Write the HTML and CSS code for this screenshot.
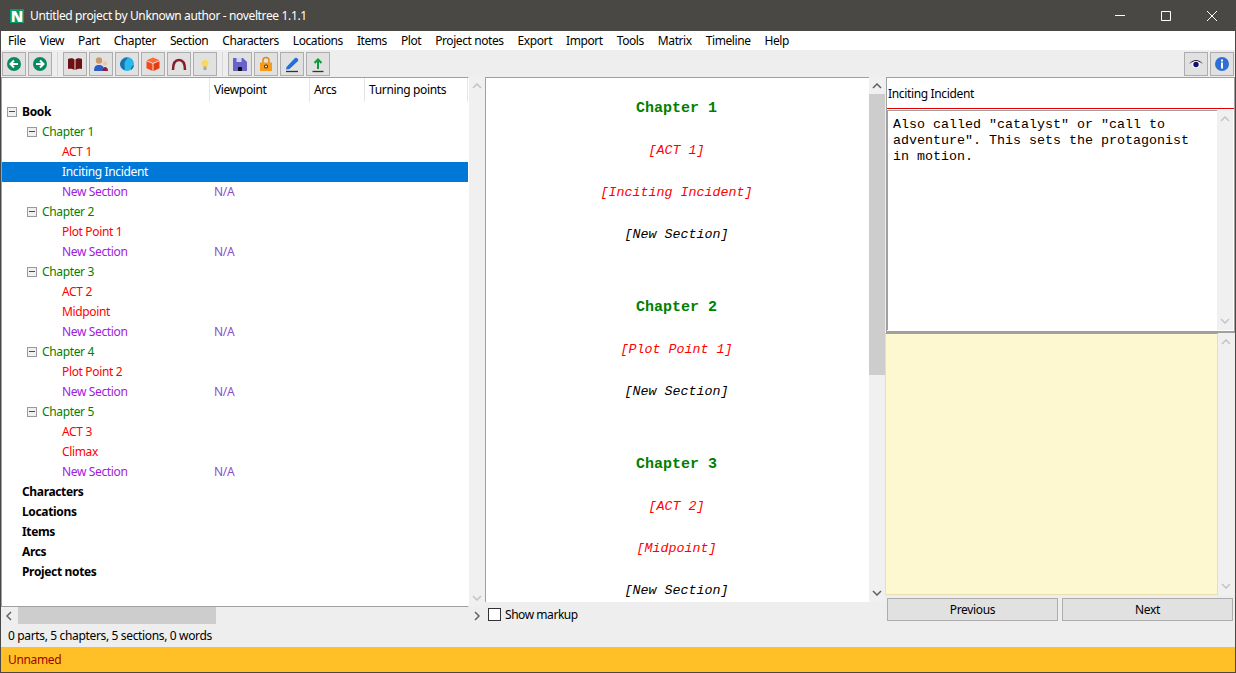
FILE: index.html
```html
<!DOCTYPE html>
<html lang="en">

<head>
    <meta charset="UTF-8">
    <title>Untitled project by Unknown author - noveltree 1.1.1</title>
    <link rel="stylesheet" href="styles.css">
</head>

<body>
    <div class="window">

        <div class="titlebar">
            <span class="logo">N</span>
            <span class="title">Untitled project by Unknown author - noveltree 1.1.1</span>
            <div class="winbtns">
                <span class="winbtn"><svg width="12" height="12" viewBox="0 0 12 12"><path d="M1 5.500h10" stroke="#fff" fill="none"/></svg></span>
                <span class="winbtn"><svg width="12" height="12" viewBox="0 0 12 12"><path d="M1.500 1.500h9v9h-9z" stroke="#fff" fill="none"/></svg></span>
                <span class="winbtn"><svg width="12" height="12" viewBox="0 0 12 12"><path d="M1 1l10 10M11 1L1 11" stroke="#fff" fill="none"/></svg></span>
            </div>
        </div>

        <div class="menubar">
            <span>File</span><span>View</span><span>Part</span><span>Chapter</span><span>Section</span><span>Characters</span><span>Locations</span><span>Items</span><span>Plot</span><span>Project notes</span><span>Export</span><span>Import</span><span>Tools</span><span>Matrix</span><span>Timeline</span><span>Help</span>
        </div>

        <div class="toolbar">
            <button class="tool"><svg width="18" height="18" viewBox="0 0 18 18"><circle cx="9" cy="9" r="7" fill="#0a8a5c"/><path d="M13 9H6M9 5.500L5.500 9 9 12.500" stroke="#fff" stroke-width="2" fill="none"/></svg></button>
            <button class="tool"><svg width="18" height="18" viewBox="0 0 18 18"><circle cx="9" cy="9" r="7" fill="#0a8a5c"/><path d="M5 9h7M9 5.500L12.500 9 9 12.500" stroke="#fff" stroke-width="2" fill="none"/></svg></button>
            <i class="sep"></i>
            <button class="tool"><svg width="18" height="18" viewBox="0 0 18 18"><path d="M2 4c2-1 5-1 6.500.5V15C7 14 4 13.500 2 14zM16 4c-2-1-5-1-6.500.5V15c1.500-1 4.500-1.500 6.500-1z" fill="#6e0f14"/></svg></button>
            <button class="tool"><svg width="18" height="18" viewBox="0 0 18 18"><circle cx="7" cy="5.500" r="3.200" fill="#c99a6b"/><path d="M2 16c0-4.500 1.500-6 5-6s5 1.500 5 6z" fill="#2f5fc4"/><circle cx="13" cy="8.500" r="2.300" fill="#eec9a0"/><path d="M10.500 16c0-2.500 1-4 2.500-4s3 1 3 4z" fill="#8c1f3c"/></svg></button>
            <button class="tool"><svg width="18" height="18" viewBox="0 0 18 18"><circle cx="9" cy="9" r="7" fill="#2ab7ea"/><path d="M3 6.500C5 3.500 7.500 2.500 9.500 2.500 9 5 7 5.500 6.500 8 6 10.500 7.500 12 6.500 15 4 14 2 11 2 9c0-1 .5-1.800 1-2.500zM13 15c-.5-2 .5-4 3-5-.2 2-1.200 3.800-3 5z" fill="#1c6fa8"/></svg></button>
            <button class="tool"><svg width="18" height="18" viewBox="0 0 18 18"><path d="M9 2.500l6.500 2.700L9 8 2.500 5.200z" fill="#ff6a3c"/><path d="M2.500 6.200l6 2.600V16l-6-2.800z" fill="#f04a1c"/><path d="M15.500 6.200l-6 2.600V16l6-2.800z" fill="#e23c12"/></svg></button>
            <button class="tool"><svg width="18" height="18" viewBox="0 0 18 18"><path d="M3 15C3 8 5.500 5 9 5s6 3 6 10" stroke="#842029" stroke-width="2.500" fill="none"/></svg></button>
            <button class="tool"><svg width="18" height="18" viewBox="0 0 18 18"><circle cx="9" cy="8.500" r="3.500" fill="#fbd75b"/><path d="M7.500 11.500h3V15h-3z" fill="#a8a8a0"/></svg></button>
            <i class="sep"></i>
            <button class="tool"><svg width="18" height="18" viewBox="0 0 18 18"><path d="M2 3h10l4 4v9H2z" fill="#6a62c8"/><path d="M5.500 3h5v4h-5z" fill="#d5d2f2"/><path d="M7 12h4v4H7z" fill="#111"/></svg></button>
            <button class="tool"><svg width="18" height="18" viewBox="0 0 18 18"><path d="M6 8V5.500a3 3 0 016 0V8" stroke="#e08a10" stroke-width="1.500" fill="none"/><path d="M3 7.500h12V16H3z" fill="#fb9a17"/><circle cx="9" cy="11.500" r="2" fill="#3a2a10"/><circle cx="9" cy="11.500" r="1" fill="#fff"/></svg></button>
            <button class="tool"><svg width="18" height="18" viewBox="0 0 18 18"><path d="M3.500 12L11.500 3.500c1-1 2-1 3 0s1 2 0 3L6.500 14l-3.500.5z" fill="#1f6fe0"/><path d="M3 16.500h12" stroke="#333" stroke-width="1.300"/></svg></button>
            <button class="tool"><svg width="18" height="18" viewBox="0 0 18 18"><path d="M9 14V5M5.500 8L9 4.500 12.500 8" stroke="#0f9a3c" stroke-width="2" fill="none"/><path d="M3.500 16.500h11" stroke="#4a2a2a" stroke-width="1.300"/></svg></button>
            <div class="spacer"></div>
            <button class="tool"><svg width="18" height="18" viewBox="0 0 18 18"><path d="M2 9c2.500-3 4.500-4 7-4s4.500 1 7 4c-2.500-2-4.500-2.500-7-2.500S4.500 7 2 9z" fill="#222"/><ellipse cx="9" cy="9.500" rx="3.800" ry="3.600" fill="#fff"/><circle cx="9" cy="9.500" r="2.700" fill="#14146e"/></svg></button>
            <button class="tool"><svg width="18" height="18" viewBox="0 0 18 18"><circle cx="9" cy="9" r="7" fill="#2f6fd4"/><path d="M8 4.500h2v2H8zM8 7.500h2V13.500H8z" fill="#fff"/></svg></button>
        </div>

        <div class="main">

            <div class="left">
                <div class="tree-wrap">
                    <div class="tree">
                        <div class="tree-head">
                            <span class="col-name"></span>
                            <span class="col-vp">Viewpoint</span>
                            <span class="col-arcs">Arcs</span>
                            <span class="col-tp">Turning points</span>
                        </div>
                        <div class="row book"><i class="minus"></i>Book</div>
                        <div class="row chapter"><i class="minus"></i>Chapter 1</div>
                        <div class="row stage">ACT 1</div>
                        <div class="row stage selected">Inciting Incident</div>
                        <div class="row sect"><span class="col-name">New Section</span><span class="na">N/A</span></div>
                        <div class="row chapter"><i class="minus"></i>Chapter 2</div>
                        <div class="row stage">Plot Point 1</div>
                        <div class="row sect"><span class="col-name">New Section</span><span class="na">N/A</span></div>
                        <div class="row chapter"><i class="minus"></i>Chapter 3</div>
                        <div class="row stage">ACT 2</div>
                        <div class="row stage">Midpoint</div>
                        <div class="row sect"><span class="col-name">New Section</span><span class="na">N/A</span></div>
                        <div class="row chapter"><i class="minus"></i>Chapter 4</div>
                        <div class="row stage">Plot Point 2</div>
                        <div class="row sect"><span class="col-name">New Section</span><span class="na">N/A</span></div>
                        <div class="row chapter"><i class="minus"></i>Chapter 5</div>
                        <div class="row stage">ACT 3</div>
                        <div class="row stage">Climax</div>
                        <div class="row sect"><span class="col-name">New Section</span><span class="na">N/A</span></div>
                        <div class="row top">Characters</div>
                        <div class="row top">Locations</div>
                        <div class="row top">Items</div>
                        <div class="row top">Arcs</div>
                        <div class="row top">Project notes</div>
                    </div>
                    <div class="vscroll">
                        <svg class="arrow" width="10" height="6" viewBox="0 0 10 6"><path d="M1 5l4-4 4 4" stroke="#c4c4c4" stroke-width="1.500" fill="none"/></svg>
                        <svg class="arrow" width="10" height="6" viewBox="0 0 10 6"><path d="M1 1l4 4 4-4" stroke="#c4c4c4" stroke-width="1.500" fill="none"/></svg>
                    </div>
                </div>
                <div class="hscroll">
                    <svg width="6" height="10" viewBox="0 0 6 10"><path d="M5 1L1 5l4 4" stroke="#606060" stroke-width="1.500" fill="none"/></svg>
                    <div class="hthumb"></div>
                    <svg width="6" height="10" viewBox="0 0 6 10"><path d="M1 1l4 4-4 4" stroke="#606060" stroke-width="1.500" fill="none"/></svg>
                </div>
                <div class="counts">0 parts, 5 chapters, 5 sections, 0 words</div>
            </div>

            <div class="middle">
                <div class="mid-wrap">
                    <div class="viewer">
                        <p class="v-chapter">Chapter 1</p>
                        <p class="v-stage">[ACT 1]</p>
                        <p class="v-stage">[Inciting Incident]</p>
                        <p class="v-sect">[New Section]</p>
                        <p class="v-chapter">Chapter 2</p>
                        <p class="v-stage">[Plot Point 1]</p>
                        <p class="v-sect">[New Section]</p>
                        <p class="v-chapter">Chapter 3</p>
                        <p class="v-stage">[ACT 2]</p>
                        <p class="v-stage">[Midpoint]</p>
                        <p class="v-sect">[New Section]</p>
                    </div>
                    <div class="vscroll mid-scroll">
                        <svg class="arrow" width="10" height="6" viewBox="0 0 10 6"><path d="M1 5l4-4 4 4" stroke="#606060" stroke-width="1.500" fill="none"/></svg>
                        <div class="vthumb"></div>
                        <svg class="arrow" width="10" height="6" viewBox="0 0 10 6"><path d="M1 1l4 4 4-4" stroke="#606060" stroke-width="1.500" fill="none"/></svg>
                    </div>
                </div>
                <label class="markup"><i class="check"></i>Show markup</label>
            </div>

            <div class="right">
                <div class="element">
                    <div class="el-title">Inciting Incident</div>
                    <div class="el-body">
                        <div class="el-text">Also called "catalyst" or "call to adventure". This sets the protagonist in motion.</div>
                        <div class="vscroll">
                            <svg class="arrow" width="10" height="6" viewBox="0 0 10 6"><path d="M1 5l4-4 4 4" stroke="#c4c4c4" stroke-width="1.500" fill="none"/></svg>
                            <svg class="arrow" width="10" height="6" viewBox="0 0 10 6"><path d="M1 1l4 4 4-4" stroke="#c4c4c4" stroke-width="1.500" fill="none"/></svg>
                        </div>
                    </div>
                </div>
                <div class="notes-wrap">
                    <div class="notes"></div>
                    <div class="vscroll">
                        <svg class="arrow" width="10" height="6" viewBox="0 0 10 6"><path d="M1 5l4-4 4 4" stroke="#c4c4c4" stroke-width="1.500" fill="none"/></svg>
                        <svg class="arrow" width="10" height="6" viewBox="0 0 10 6"><path d="M1 1l4 4 4-4" stroke="#c4c4c4" stroke-width="1.500" fill="none"/></svg>
                    </div>
                </div>
                <div class="nav">
                    <button class="navbtn">Previous</button>
                    <button class="navbtn">Next</button>
                </div>
            </div>

        </div>

        <div class="statusbar">Unnamed</div>
    </div>
</body>

</html>
```

FILE: styles.css
```css
* {
    box-sizing: border-box;
    padding: 0;
    margin: 0;
}

body {
    background-color: #eeeeee;
    font-family: "Noto Sans", "Open Sans", sans-serif;
    font-size: 12px;
    color: #000;
}

.window {
    width: 1236px;
    height: 673px;
    display: flex;
    flex-direction: column;
    background-color: #eeeeee;
    border: 1px solid #4a4845;
    border-width: 0 1px 1px 1px;
    overflow: hidden;
}

.titlebar {
    height: 31px;
    flex: none;
    display: flex;
    align-items: center;
    margin: 0 -1px;
    background-color: #4a4845;
    color: #fff;
}

.logo {
    width: 14px;
    height: 14px;
    margin-left: 10px;
    margin-right: 6px;
    background-color: #0a9a68;
    color: #fff;
    font-weight: 900;
    font-size: 15px;
    line-height: 14px;
    text-align: center;
}

.title {
    letter-spacing: -0.36px;
}

.winbtns {
    display: flex;
    margin-left: auto;
    padding-right: 1px;
}

.winbtn {
    width: 46px;
    height: 31px;
    display: flex;
    align-items: center;
    justify-content: center;
}

.menubar {
    height: 19px;
    flex: none;
    display: flex;
    align-items: center;
    background-color: #fff;
    letter-spacing: -0.42px;
}

.menubar span {
    padding: 0 7px;
}

.toolbar {
    height: 27px;
    flex: none;
    display: flex;
    align-items: flex-start;
    gap: 2px;
    padding: 2px 1px 0 1px;
}

.tool {
    width: 24px;
    height: 24px;
    flex: none;
    display: flex;
    align-items: center;
    justify-content: center;
    background-color: #e1e1e1;
    border: 1px solid #adadad;
}

.sep {
    width: 1px;
    height: 24px;
    margin: 0 3px 0 3px;
    background-color: #d8d8d8;
}

.spacer {
    flex: 1;
}

.main {
    height: 570px;
    flex: none;
    display: grid;
    grid-template-columns: 484px 400px 350px;
}

.left,
.middle,
.right {
    display: flex;
    flex-direction: column;
    min-width: 0;
}

.tree-wrap {
    height: 530px;
    flex: none;
    display: flex;
}

.tree {
    width: 468px;
    background-color: #fff;
    border: 1px solid #a0a0a0;
    border-right: 1px solid #fff;
    overflow: hidden;
    letter-spacing: -0.35px;
}

.tree-head {
    height: 24px;
    display: flex;
    align-items: center;
    color: #000;
}

.tree-head span {
    height: 24px;
    line-height: 24px;
    border-right: 1px solid #e5e5e5;
    padding-left: 4px;
}

.tree-head .col-name {
    width: 208px;
    padding: 0;
}

.tree-head .col-vp {
    width: 100px;
}

.tree-head .col-arcs {
    width: 55px;
}

.tree-head .col-tp {
    width: 103px;
}

.row {
    height: 20px;
    line-height: 20px;
    display: flex;
    align-items: center;
    white-space: nowrap;
}

.col-name {
    display: block;
}

.book {
    padding-left: 5px;
    font-weight: 700;
}

.book .minus {
    margin-right: 5px;
}

.chapter {
    padding-left: 25px;
    color: #008000;
}

.chapter .minus {
    margin-right: 5px;
}

.stage {
    padding-left: 60px;
    color: #ff0000;
}

.stage.selected {
    background-color: #0078d7;
    color: #fff;
}

.sect {
    padding-left: 60px;
    color: #a020e0;
}

.sect .col-name {
    width: 152px;
}

.na {
    color: #8b4fc9;
}

.top {
    padding-left: 20px;
    font-weight: 700;
}

.minus {
    width: 10px;
    height: 10px;
    flex: none;
    display: block;
    position: relative;
    background-color: #f0f0f0;
    border: 1px solid #9a9a9a;
}

.minus::after {
    content: "";
    position: absolute;
    left: 1px;
    top: 3px;
    width: 6px;
    height: 1px;
    background-color: #40506a;
}

.vscroll {
    width: 16px;
    flex: none;
    display: flex;
    flex-direction: column;
    justify-content: space-between;
    align-items: center;
    padding: 6px 0;
    background-color: #f0f0f0;
}

.arrow {
    flex: none;
}

.hscroll {
    height: 17px;
    flex: none;
    display: flex;
    align-items: center;
    padding: 0 5px;
}

.hthumb {
    width: 198px;
    height: 17px;
    margin-left: 6px;
    margin-right: auto;
    background-color: #cdcdcd;
}

.counts {
    padding-left: 7px;
    line-height: 23px;
    letter-spacing: -0.35px;
}

.mid-wrap {
    height: 525px;
    flex: none;
    display: flex;
}

.viewer {
    width: 384px;
    background-color: #fff;
    border: 1px solid #a0a0a0;
    border-width: 1px 0 0 1px;
    overflow: hidden;
    text-align: center;
    font-family: "Liberation Mono", monospace;
    font-size: 13.33px;
    line-height: 16px;
    padding: 22px 2px 0 0;
}

.viewer p {
    margin-bottom: 26px;
}

.v-chapter {
    font-size: 15px;
    font-weight: 700;
    color: #008000;
    line-height: 17px;
}

.viewer .v-sect {
    margin-bottom: 56px;
    font-style: italic;
    color: #000;
}

.v-stage {
    font-style: italic;
    color: #ff0000;
}

.mid-scroll {
    padding: 6px 0;
    justify-content: flex-start;
}

.vthumb {
    width: 16px;
    height: 281px;
    margin-top: 5px;
    margin-bottom: auto;
    background-color: #cdcdcd;
}

.markup {
    display: flex;
    align-items: center;
    height: 24px;
    padding-left: 3px;
    letter-spacing: -0.45px;
}

.check {
    width: 13px;
    height: 13px;
    margin-right: 4px;
    background-color: #fff;
    border: 1px solid #333;
}

.element {
    height: 256px;
    flex: none;
    display: flex;
    flex-direction: column;
    margin-left: 1px;
    background-color: #fff;
    border: 1px solid #a0a0a0;
    border-width: 1px 1px 2px 1px;
}

.el-title {
    height: 31px;
    flex: none;
    line-height: 31px;
    padding-left: 1px;
    color: #000;
    border-bottom: 1px solid #e00000;
    letter-spacing: -0.35px;
}

.el-body {
    flex: 1;
    display: flex;
    min-height: 0;
    padding: 1px 0 1px;
}

.el-text {
    width: 330px;
    border: 1px solid #a0a0a0;
    border-width: 1px 0 0 1px;
    padding: 6px 5px;
    font-family: "Liberation Mono", monospace;
    font-size: 13.33px;
    line-height: 16px;
}

.notes-wrap {
    height: 262px;
    flex: none;
    display: flex;
}

.notes {
    width: 333px;
    background-color: #fef8d0;
    border: 1px solid #e8e0b0;
    border-top: 1px solid #a0a0a0;
}

.nav {
    display: flex;
    gap: 4px;
    padding: 3px 2px 0 2px;
}

.navbtn {
    width: 171px;
    height: 23px;
    background-color: #e1e1e1;
    border: 1px solid #adadad;
    font-family: "Noto Sans", "Open Sans", sans-serif;
    font-size: 12px;
    letter-spacing: -0.35px;
    color: #000;
}

.statusbar {
    height: 25px;
    flex: none;
    padding-left: 7px;
    line-height: 25px;
    background-color: #fec026;
    color: #a00000;
    letter-spacing: -0.35px;
}
```
